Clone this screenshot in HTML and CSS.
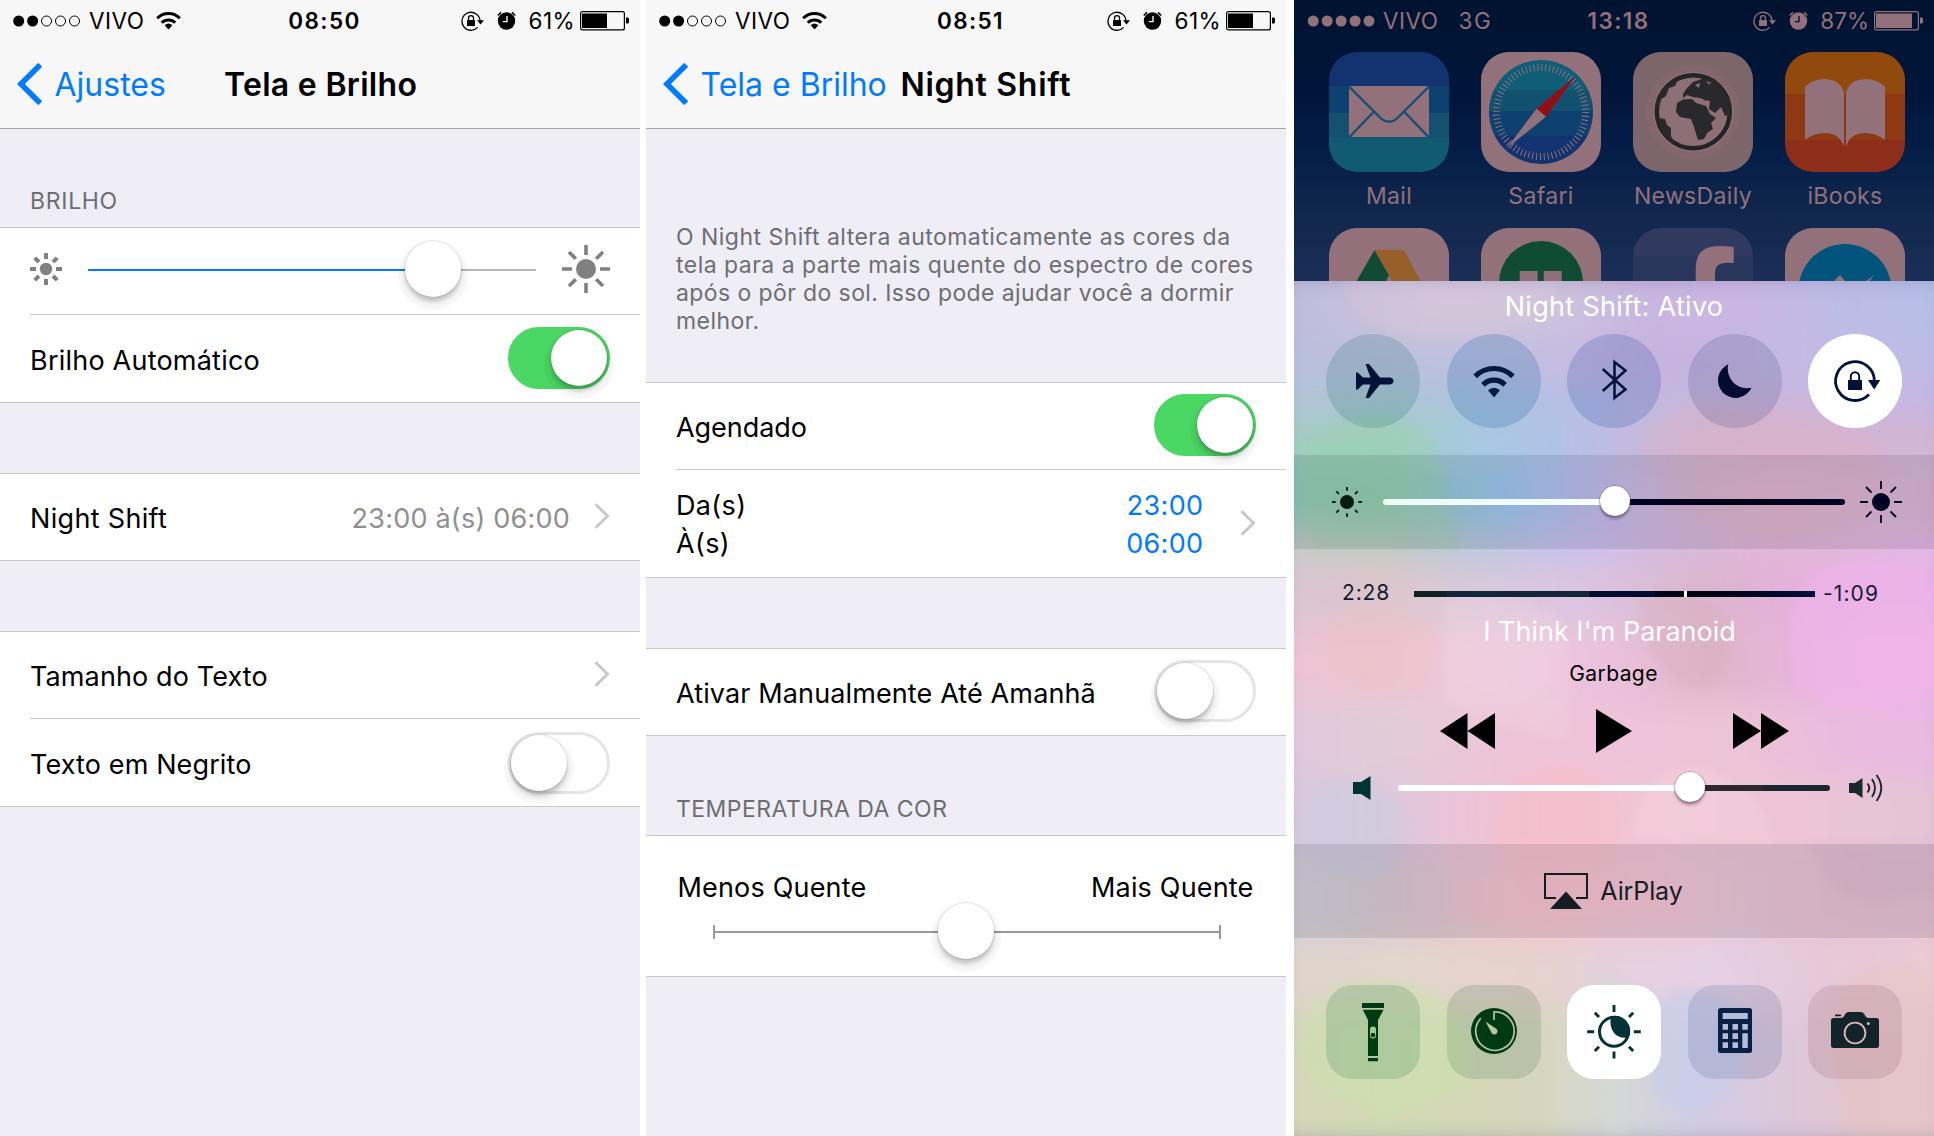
FILE: index.html
```html
<!DOCTYPE html>
<html lang="pt-BR">
<head>
<meta charset="utf-8">
<title>Night Shift</title>
<link rel="stylesheet" href="styles.css">
</head>
<body>
<svg class="defs" width="0" height="0" aria-hidden="true">
  <symbol id="wifi" viewBox="0 0 25 19"><g fill="none" stroke="currentColor" stroke-width="3"><path d="M1.2 7.2A15.8 15.8 0 0 1 23.8 7.2"/><path d="M5.8 11.8A9.4 9.4 0 0 1 19.2 11.8"/></g><path d="M8.6 14.3Q12.5 10.9 16.4 14.3L12.5 18.6Z" fill="currentColor"/></symbol>
  <symbol id="lock" viewBox="0 0 23 20"><path d="M19 10A9 9 0 1 0 16.6 16.4" fill="none" stroke="currentColor" stroke-width="1.3"/><path d="M16 9.3H23L19.5 13.6Z" fill="currentColor"/><rect x="6" y="9" width="8" height="6" rx=".6" fill="currentColor"/><path d="M7.5 9.5V7.2a2.5 2.5 0 0 1 5 0V9.5" fill="none" stroke="currentColor" stroke-width="1.3"/></symbol>
  <symbol id="sun" viewBox="0 0 48 48"><g stroke="currentColor" stroke-width="3.6"><path d="M24 0V10M24 38V48M0 24H10M38 24H48M7 7L13.8 13.8M34.2 34.2L41 41M41 7L34.2 13.8M13.8 34.2L7 41"/></g><circle cx="24" cy="24" r="10" fill="currentColor"/></symbol>
  <symbol id="chev" viewBox="0 0 16 26"><path d="M1.5 1.2L13.5 13L1.5 24.8" fill="none" stroke="currentColor" stroke-width="3"/></symbol>
  <symbol id="back" viewBox="0 0 25 42"><path d="M23.2 1.8L3.9 21L23.2 40.2" fill="none" stroke="currentColor" stroke-width="5.6"/></symbol>
</svg>
<main class="screens">

  <section class="phone">
    <header class="status">
      <div class="carrier">
        <svg class="dots" viewBox="0 0 68 12"><g fill="currentColor"><circle cx="5.7" cy="6" r="5.5"/><circle cx="19.6" cy="6" r="5.5"/></g><g fill="none" stroke="currentColor"><circle cx="33.5" cy="6" r="5"/><circle cx="47.5" cy="6" r="5"/><circle cx="61.5" cy="6" r="5"/></g></svg>
        <span class="vivo">VIVO</span><svg class="wifi"><use href="#wifi"/></svg>
      </div>
      <span class="time">08:50</span>
      <div class="tray"><svg class="lock"><use href="#lock"/></svg>
        <svg class="alarm" viewBox="0 0 19 19"><circle cx="9.5" cy="10" r="8.7" fill="currentColor"/><path d="M.8 4.5L4 1.2M18.2 4.5L15 1.2" stroke="currentColor" stroke-width="1.6"/><path d="M10 5V10.6H5.8" fill="none" stroke="#f7f7f7" stroke-width="1.4"/></svg>
        <span class="pct">61%</span>
        <svg class="battery" viewBox="0 0 49 20"><rect x=".6" y=".6" width="43.8" height="18.3" rx="2" fill="none" stroke="currentColor" stroke-width="1.2"/><rect x="2" y="2.5" width="25" height="14.5" fill="currentColor"/><path d="M46 6.5h1.500q1.500 0 1.500 1.500v3q0 1.500-1.500 1.500H46z" fill="currentColor"/></svg></div>
    </header>
    <nav class="nav"><a class="back"><svg class="backicon"><use href="#back"/></svg>Ajustes</a><h1 class="title">Tela e Brilho</h1></nav>
    <h2 class="label label-first">BRILHO</h2>
    <div class="group">
      <div class="row sliderrow">
        <svg class="sun-s" viewBox="0 0 32 32"><path d="M16 0V6M16 26V32M0 16H6M26 16H32M4.8 4.8L9 9M23 23L27.2 27.2M27.2 4.8L23 9M9 23L4.8 27.2" stroke="#808080" stroke-width="4"/><circle cx="16" cy="16" r="6.2" fill="#808080"/></svg>
        <div class="track"><i class="thumb"></i></div>
        <svg class="sun-l"><use href="#sun"/></svg>
      </div>
      <div class="row line"><span class="t2">Brilho Automático</span><i class="toggle on up"></i></div>
    </div>
    <div class="group gap70">
      <div class="row"><span class="t3">Night Shift</span><span class="value">23:00 à(s) 06:00</span><svg class="chev"><use href="#chev"/></svg></div>
    </div>
    <div class="group gap70">
      <div class="row"><span>Tamanho do Texto</span><svg class="chev"><use href="#chev"/></svg></div>
      <div class="row line"><span>Texto em Negrito</span><i class="toggle"></i></div>
    </div>
  </section>

  <section class="phone second">
    <header class="status">
      <div class="carrier">
        <svg class="dots" viewBox="0 0 68 12"><g fill="currentColor"><circle cx="5.7" cy="6" r="5.5"/><circle cx="19.6" cy="6" r="5.5"/></g><g fill="none" stroke="currentColor"><circle cx="33.5" cy="6" r="5"/><circle cx="47.5" cy="6" r="5"/><circle cx="61.5" cy="6" r="5"/></g></svg>
        <span class="vivo">VIVO</span><svg class="wifi"><use href="#wifi"/></svg>
      </div>
      <span class="time">08:51</span>
      <div class="tray"><svg class="lock"><use href="#lock"/></svg>
        <svg class="alarm" viewBox="0 0 19 19"><circle cx="9.5" cy="10" r="8.7" fill="currentColor"/><path d="M.8 4.5L4 1.2M18.2 4.5L15 1.2" stroke="currentColor" stroke-width="1.6"/><path d="M10 5V10.6H5.8" fill="none" stroke="#f7f7f7" stroke-width="1.4"/></svg>
        <span class="pct">61%</span>
        <svg class="battery" viewBox="0 0 49 20"><rect x=".6" y=".6" width="43.8" height="18.3" rx="2" fill="none" stroke="currentColor" stroke-width="1.2"/><rect x="2" y="2.5" width="25" height="14.5" fill="currentColor"/><path d="M46 6.5h1.500q1.500 0 1.500 1.500v3q0 1.500-1.500 1.500H46z" fill="currentColor"/></svg></div>
    </header>
    <nav class="nav"><a class="back wide"><svg class="backicon"><use href="#back"/></svg>Tela e Brilho</a><h1 class="title spaced">Night Shift</h1></nav>
    <p class="note">O Night Shift altera automaticamente as cores da<br>tela para a parte mais quente do espectro de cores<br><span class="tight">após o pôr do sol. Isso pode ajudar você a dormir</span><br>melhor.</p>
    <div class="group">
      <div class="row"><span class="t0">Agendado</span><i class="toggle on up"></i></div>
      <div class="row line tall"><div class="pair"><span>Da(s)</span><span>À(s)</span></div><div class="pair blue"><span>23:00</span><span>06:00</span></div><svg class="chev"><use href="#chev"/></svg></div>
    </div>
    <div class="group gap70">
      <div class="row"><span>Ativar Manualmente Até Amanhã</span><i class="toggle up"></i></div>
    </div>
    <h2 class="label label-temp">TEMPERATURA DA COR</h2>
    <div class="group temp">
      <div class="ends"><span>Menos Quente</span><span>Mais Quente</span></div>
      <div class="scale"><i class="thumb"></i></div>
    </div>
  </section>

  <section class="phone home">
    <header class="status dim">
      <div class="carrier">
        <svg class="dots" viewBox="0 0 68 12"><g fill="currentColor"><circle cx="6.2" cy="6" r="5.5"/><circle cx="20.2" cy="6" r="5.5"/><circle cx="34.1" cy="6" r="5.5"/><circle cx="48.1" cy="6" r="5.5"/><circle cx="62" cy="6" r="5.5"/></g></svg>
        <span class="vivo">VIVO</span><span class="net">3G</span>
      </div>
      <span class="time">13:18</span>
      <div class="tray"><svg class="lock"><use href="#lock"/></svg>
        <svg class="alarm" viewBox="0 0 19 19"><circle cx="9.5" cy="10" r="8.7" fill="currentColor"/><path d="M.8 4.5L4 1.2M18.2 4.5L15 1.2" stroke="currentColor" stroke-width="1.6"/><path d="M10 5V10.6H5.8" fill="none" stroke="#00132f" stroke-width="1.4"/></svg>
        <span class="pct p87">87%</span>
        <svg class="battery" viewBox="0 0 49 20"><rect x=".6" y=".6" width="43.8" height="18.3" rx="2" fill="none" stroke="currentColor" stroke-width="1.2"/><rect x="2" y="2.5" width="36" height="14.5" fill="currentColor"/><path d="M46 6.5h1.500q1.500 0 1.500 1.500v3q0 1.500-1.500 1.500H46z" fill="currentColor"/></svg></div>
    </header>
    <div class="apps">
      <div class="app"><svg class="icon" viewBox="0 0 120 120"><path fill="#12336f" d="M0 0h120v34H0z"/><path fill="#0e4070" d="M0 34h120v27H0z"/><path fill="#155070" d="M0 61h120v25H0z"/><path fill="#105a74" d="M0 86h120v34H0z"/><path fill="#93717b" d="M20 34h80v51H20z"/><path d="M20 34.5L51 65.5Q60 74 69 65.5L100 34.5M20.5 85L44.5 60M99.5 85L75.5 60" fill="none" stroke="#144f72" stroke-width="2.4"/></svg><span>Mail</span></div>
      <div class="app"><svg class="icon" viewBox="0 0 120 120"><clipPath id="dial"><circle cx="60" cy="60" r="52"/></clipPath><path fill="#93717b" d="M0 0h120v120H0z"/><g clip-path="url(#dial)"><path fill="#105d77" d="M0 0h120v38H0z"/><path fill="#12506f" d="M0 38h120v21H0z"/><path fill="#0e4070" d="M0 59h120v25H0z"/><path fill="#12336f" d="M0 84h120v36H0z"/></g><circle cx="60" cy="60" r="44.5" fill="none" stroke="#93717b" stroke-width="7" stroke-dasharray=".95 2.933"/><path d="M94.7 24L65 64.7L55.5 56.7Z" fill="#920f16"/><path d="M25.5 96.5L55.5 56.7L65 64.7Z" fill="#93717b"/></svg><span>Safari</span></div>
      <div class="app"><svg class="icon" viewBox="0 0 120 120"><path fill="#7d666a" d="M0 0h120v120H0z"/><circle cx="60" cy="60" r="47" fill="#84676d"/><circle cx="60.3" cy="59.7" r="40" fill="#93717b"/><circle cx="60.3" cy="59.7" r="36.5" fill="#8d7077" stroke="#222426" stroke-width="4.5"/><g fill="#29282b"><path d="M43 60L44 51L50 47.5L59 47L63 51L73 54L77 62L83 66L78 71L80 77L74 81L71 87L65 88L61 75L58 67L47 65Z"/><path d="M50 46L50 42L54 36L60 30L72 26L82 27L93 40L98 55L97 62L92 64L88 55L82 61L76 57L77 49L70 48L60 45L54 43Z"/><path d="M45 27L42 34L36 36L33 44L27 48L24 58L23 50L29 37Z"/><path d="M25 66L32 67L34 73L38 76L38 84L42 92L30 82Z"/></g><path d="M62 45l8 2 3 4-5 0zM62 33l5-2-1 5zM73 29l6 2-4 1 3 3" fill="#8d7077"/></svg><span>NewsDaily</span></div>
      <div class="app"><svg class="icon" viewBox="0 0 120 120"><path fill="#91490e" d="M0 0h120v42H0z"/><path fill="#8f3914" d="M0 42h120v46H0z"/><path fill="#8c2e1a" d="M0 88h120v32H0z"/><path fill="#93717b" d="M20 34.5Q28 27 40 27Q57 28 59 42V95Q55 81 40 81Q29 81 20 88ZM100 34.5Q92 27 80 27Q63 28 61 42V95Q65 81 80 81Q91 81 100 88Z"/></svg><span>iBooks</span></div>
      <div class="app"><svg class="icon" viewBox="0 0 120 120"><path fill="#93717b" d="M0 0h120v120H0z"/><path d="M45.5 22L60 47L57 54H27Z" fill="#104a34"/><path d="M45.5 22H75L92 54H63L60 47Z" fill="#95602c"/></svg></div>
      <div class="app"><svg class="icon" viewBox="0 0 120 120"><path fill="#93717b" d="M0 0h120v120H0z"/><circle cx="60" cy="55" r="42" fill="#104b35"/><path fill="#8f6f7a" d="M38.7 43h18v20h-18zM62.7 43h18v20h-18z"/></svg></div>
      <div class="app"><svg class="icon" viewBox="0 0 120 120"><path fill="#30395f" d="M0 0h120v28H0z"/><path fill="#27365a" d="M0 28h120v92H0z"/><path fill="#93717b" d="M62.7 60V40Q63 18 85 18Q95 18 100.7 19V35H92Q82 35 82 45V60Z"/></svg></div>
      <div class="app"><svg class="icon" viewBox="0 0 120 120"><path fill="#93717b" d="M0 0h120v120H0z"/><circle cx="60" cy="62.5" r="46.5" fill="#02547c"/><path fill="#93717b" d="M48 54L55 47L61 54ZM80 54L89 47L84 54Z"/></svg></div>
    </div>

    <div class="cc">
      <div class="wall" aria-hidden="true">
        <i class="w w1"></i><i class="w w2"></i><i class="w w3"></i><i class="w w4"></i><i class="w w5"></i><i class="w w6"></i><i class="w w7"></i><i class="w w8"></i><i class="w w9"></i><i class="w w10"></i><i class="w w11"></i><i class="w w12"></i><i class="w w13"></i>
      </div>
      <svg class="patches" viewBox="0 281 640 855" aria-hidden="true">
        <path d="M50 281Q60 340 150 340Q250 338 268 281Z" fill="#dcc6d8" opacity=".3"/>
        <path d="M5 455Q40 415 85 415Q140 420 143 460L165 549H20Z" fill="#9cd0a8" opacity=".3"/>
        <path d="M345 455Q360 395 450 400Q560 420 590 455V510Q500 560 400 520Z" fill="#e2aec4" opacity=".2"/>
        <path d="M495 640Q490 570 560 562Q640 550 640 620V690Q580 720 520 700Q498 690 495 640Z" fill="#f2b4ec" opacity=".45"/>
        <path d="M30 620Q80 590 140 620Q150 660 130 690Q70 700 40 660Z" fill="#f0bec4" opacity=".25"/>
        <path d="M150 600Q210 580 268 620Q285 700 270 740Q200 730 150 700Z" fill="#f2d4e2" opacity=".3"/>
        <path d="M345 600Q420 570 440 640Q430 690 400 690Q350 670 345 600Z" fill="#d6a8b8" opacity=".3"/>
        <path d="M200 850Q190 760 290 765Q330 780 320 860Q280 910 240 900Z" fill="#fcbcc4" opacity=".25"/>
        <path d="M336 840Q345 760 410 768Q470 790 480 844Z" fill="#fad8e0" opacity=".3"/>
        <path d="M8 840Q10 782 60 780Q115 790 115 844Q90 890 60 880Q20 870 8 840Z" fill="#cacce0" opacity=".4"/>
        <path d="M515 844H640V890Q580 910 540 890Z" fill="#dcb0cc" opacity=".25"/>
        <path d="M10 1060Q10 980 80 978Q180 985 178 1070Q170 1100 120 1105L88 1128L75 1105Q20 1100 10 1060Z" fill="#cae2ac" opacity=".45"/>
        <path d="M350 1050Q350 992 400 990Q450 995 455 1040Q440 1110 395 1118Q355 1100 350 1050Z" fill="#c6ccee" opacity=".5"/>
        <path d="M300 970Q300 1040 310 1136H335Q330 1060 334 985Z" fill="#d0dcd8" opacity=".35"/>
        <path d="M535 1050Q530 960 600 960Q640 970 640 1000V1136H560Z" fill="#e8c0bc" opacity=".3"/>
      </svg>
      <div class="content">
        <p class="cctitle">Night Shift: Ativo</p>
        <div class="buttons">
          <svg class="round c1" viewBox="0 0 94 94"><path fill="#001238" d="M30 38.3L32 38.8L37 43.4H44.5L39.5 30H43L54 43.4H64Q67.5 44 67.5 47Q67.5 50 64 50.4H54L43 64H39.5L44.5 50.4H37L32 55.2L30 55.7Z"/></svg>
          <svg class="round c2" viewBox="0 0 94 94"><g fill="none" stroke="#001a3c" stroke-width="5.2"><path d="M28.2 42.3A26.5 26.5 0 0 1 65.8 42.3"/><path d="M36 50.8A15.5 15.5 0 0 1 58 50.8"/></g><path fill="#001a3c" d="M41 56.3Q47 51.3 53 56.3L47 63.5Z"/></svg>
          <svg class="round c3" viewBox="0 0 94 94"><path d="M35.7 35L58.5 55.5L47.5 64V28L58.5 36.5L35.7 57" fill="none" stroke="#001238" stroke-width="2.5"/></svg>
          <svg class="round c4" viewBox="0 0 94 94"><path fill="#000c32" d="M40.3 30.3A17.6 17.6 0 1 0 63.5 53.8A19.5 19.5 0 0 1 40.3 30.3Z"/></svg>
          <svg class="round lit" viewBox="0 0 94 94"><path d="M66.4 47A19.4 19.4 0 1 0 61 60.5" fill="none" stroke="#001238" stroke-width="2.8"/><path d="M60 46H72.3L66.2 55.6Z" fill="#001238"/><path d="M40 46h14v10H40z" fill="#001238"/><path d="M42.8 46.5V42.5a4.2 4.2 0 0 1 8.4 0V46.5" fill="none" stroke="#001238" stroke-width="2"/></svg>
        </div>
        <div class="band bright">
          <svg class="ccsun-s" viewBox="0 0 30 30"><circle cx="15" cy="15" r="7" fill="#041c10"/><path d="M15 0V3.7M15 26.3V30M0 15H3.7M26.3 15H30M4.3 4.3L7 7M23 23L25.7 25.7M25.7 4.3L23 7M7 23L4.3 25.7" stroke="#041c20" stroke-width="1.8"/></svg>
          <div class="bar bar-b"><i class="knob"></i></div>
          <svg class="ccsun-l" viewBox="0 0 42 42"><circle cx="21" cy="21" r="9" fill="#000524"/><path d="M21 0V8M21 34V42M0 21H8M34 21H42M6 6L11.5 11.5M30.5 30.5L36 36M36 6L30.5 11.5M11.5 30.5L6 36" stroke="#000524" stroke-width="1.8"/></svg>
        </div>
        <div class="media">
          <div class="progress"><span class="elapsed">2:28</span><div class="seek"><i class="mark"></i></div><span class="left">-1:09</span></div>
          <p class="song">I Think I'm Paranoid</p>
          <p class="artist">Garbage</p>
          <div class="transport">
            <svg width="55" height="36" viewBox="0 0 55 36"><path d="M0 18L27.5 0V18L55 0V36L27.5 18V36Z"/></svg>
            <svg width="36" height="44" viewBox="0 0 36 44"><path d="M0 0L36 22L0 44Z"/></svg>
            <svg width="56" height="36" viewBox="0 0 56 36"><path d="M56 18L28 0V18L0 0V36L28 18V36Z"/></svg>
          </div>
          <div class="volume">
            <svg class="vol-s" viewBox="0 0 18 24"><path d="M0 6H8L17.5 0V24L8 18H0Z" fill="#003434"/></svg>
            <div class="bar bar-v"><i class="knob"></i></div>
            <svg class="vol-l" viewBox="0 0 34 28"><path d="M0 9H6L13.5 4V24L6 19H0Z" fill="#1c2830"/><g fill="none" stroke="#1c2830" stroke-width="1.9"><path d="M18.5 9.5Q22 14 18.5 18.5"/><path d="M23 5Q29 14 23 23"/><path d="M27.5 1Q37 14 27.5 27"/></g></svg>
          </div>
        </div>
        <div class="band airplay"><svg width="44" height="36" viewBox="0 0 44 36"><path d="M12 25H1V1H43V25H32" fill="none" stroke="#151c24" stroke-width="2"/><path d="M22 18.5L38 36H6Z" fill="#151c24"/></svg><span>AirPlay</span></div>
        <div class="buttons tools">
          <svg class="square s1" viewBox="0 0 94 94"><path fill="#003a12" d="M36 18H58V23H36ZM36.8 24.8H57.5L52 35V71H42V35ZM42 73H52V76.2H42Z"/><rect x="44" y="41.5" width="6" height="12" rx="3" fill="#a4c89c"/><circle cx="47" cy="50" r="2.3" fill="#003a12"/></svg>
          <svg class="square s2" viewBox="0 0 94 94"><circle cx="47" cy="46" r="23" fill="#003a12"/><path d="M47 35V27A19.2 19.2 0 1 1 33.8 33.2" fill="none" stroke="#b4c8a4" stroke-width="1.7"/><path d="M38.5 36.5L49.3 43.8A3.2 3.2 0 1 1 44.6 48Z" fill="#b4c8a4"/></svg>
          <svg class="square lit" viewBox="0 0 94 94"><path d="M47 20V27M47 66.5V73.5M20.2 46.8H27.2M66.8 46.8H73.8M27.8 27.8L32 32M62 61.8L66.2 66M66.2 27.8L62 32M32 61.8L27.8 66" stroke="#043238" stroke-width="2.9"/><circle cx="47" cy="46.8" r="14.5" fill="#fff" stroke="#043238" stroke-width="3"/><path d="M44 31.5A15 15 0 0 1 61.5 52.5Q52 54 47 48Q42 41 44 31.5Z" fill="#043238"/></svg>
          <svg class="square s4" viewBox="0 0 94 94"><rect x="30" y="23" width="34" height="45" rx="2.5" fill="#082044"/><path fill="#b4bcdc" d="M34.6 28H59.8V34H34.6ZM34.6 39H40V44.7H34.6ZM44.5 39H50V44.7H44.5ZM54.3 39H59.8V44.7H54.3ZM34.6 48.3H40V54H34.6ZM44.5 48.3H50V54H44.5ZM34.6 57.3H40V63H34.6ZM44.5 57.3H50V63H44.5ZM54.3 48.3H59.8V63H54.3Z"/></svg>
          <svg class="square s5" viewBox="0 0 94 94"><path fill="#12232a" d="M27 29.5H33V31.3H27ZM25.5 33H33Q35.5 33 37 29.5Q38 27 40.5 27H53Q55.5 27 56.5 29.5Q58 33 60.5 33H68.5Q71 33 71 35.5V60.5Q71 63 68.5 63H25.5Q23 63 23 60.5V35.5Q23 33 25.5 33Z"/><circle cx="47" cy="48" r="10.4" fill="none" stroke="#d8b4bc" stroke-width="1.9"/><circle cx="60.3" cy="38.5" r="1.5" fill="#d8b4bc"/></svg>
        </div>
      </div>
    </div>
  </section>
</main>
</body>
</html>
```
FILE: styles.css
```css
* { box-sizing: border-box; margin: 0; padding: 0; }
body { background: #fff; font-family: Inter, "Liberation Sans", sans-serif; color: #000; overflow: hidden; }
svg { display: block; flex: none; }
i { display: block; }
.defs { position: absolute; }
.screens { display: flex; width: 1934px; height: 1136px; }
.phone { flex: none; width: 640px; height: 1136px; background: #efeef7; overflow: hidden; }
.second { margin: 0 8px 0 6px; }

/* status bar */
.status { display: flex; align-items: center; height: 41px; padding: 0 11px 0 13px; background: #f7f7f7; font-size: 22.5px; white-space: nowrap; }
.carrier { display: flex; align-items: center; width: 266px; }
.dots { width: 68px; height: 12px; }
.vivo { margin-left: 8px; letter-spacing: .5px; }
.wifi { width: 25px; height: 19px; margin-left: 11px; }
.net { margin-left: 20px; letter-spacing: 1.6px; }
.time { width: 91px; text-align: center; font-weight: 600; letter-spacing: 1.4px; }
.tray { display: flex; align-items: center; margin-left: auto; }
.lock { width: 23px; height: 20px; }
.alarm { width: 19px; height: 19px; margin-left: 13px; }
.pct { margin-left: 13px; letter-spacing: .4px; }
.p87 { margin-left: 12px; letter-spacing: 0; }
.battery { width: 49px; height: 20px; margin-left: 5px; }

/* navigation bar */
.nav { display: flex; align-items: center; height: 88px; padding-left: 17px; background: #f7f7f7; border-bottom: 1px solid #a7a7ab; font-size: 32px; white-space: nowrap; }
.back { display: flex; align-items: center; width: 207px; color: #007aff; }
.back.wide { width: 237.5px; }
.backicon { width: 25px; height: 42px; margin: 0 12.5px 1px 0; }
.title { font-size: 32px; font-weight: 600; letter-spacing: .3px; }
.title.spaced { letter-spacing: .7px; }

/* grouped lists */
.label { padding-left: 30px; font-size: 23px; font-weight: 400; color: #6d6d72; letter-spacing: .7px; line-height: 28px; }
.label-first { height: 98px; padding-top: 57.5px; }
.label-temp { height: 99px; padding-top: 59px; letter-spacing: .46px; }
.group { background: #fff; border-top: 1px solid #c8c7cc; border-bottom: 1px solid #c8c7cc; font-size: 27px; letter-spacing: .12px; }
.gap70 { margin-top: 70px; }
.row { display: flex; align-items: center; height: 86px; padding-right: 30px; margin-left: 30px; }
.row > span { padding-top: 3px; }
.line { height: 88px; border-top: 1px solid #c8c7cc; }
.t0 { letter-spacing: -.05px; }
.t2 { letter-spacing: .22px; }
.t3 { letter-spacing: .32px; }
.value { margin-left: auto; color: #8e8e93; letter-spacing: .22px; }
.chev { position: relative; top: -1px; width: 16px; height: 26px; margin-left: auto; color: #c7c7cc; }
.value + .chev { margin-left: 24px; }
.toggle { position: relative; width: 102px; height: 62px; margin-left: auto; border-radius: 31px; border: 3px solid #e5e5e5; }
.toggle.up { top: -1px; }
.toggle.on { background: #4bd763; border-color: #4bd763; }
.toggle::after { content: ""; position: absolute; left: 0; top: 0; width: 56px; height: 56px; border-radius: 50%; background: #fff; box-shadow: 0 0 0 1px rgba(0,0,0,.08), 0 5px 4px rgba(0,0,0,.2), 0 6px 2px 7px rgba(0,0,0,.035); }
.toggle.on::after { left: 40px; }
.sun-s { width: 32px; height: 32px; position: relative; top: -2px; }
.sun-l { width: 48px; height: 48px; color: #808080; position: relative; top: -2px; }
.track { position: relative; top: -1px; width: 448px; height: 2px; margin: 0 26px; background: linear-gradient(90deg, #007aff 345px, #b6b6b6 345px); }
.thumb { position: absolute; left: 317px; top: -28px; width: 56px; height: 56px; border-radius: 50%; background: #fff; box-shadow: 0 0 0 1px rgba(0,0,0,.08), 0 5px 4px rgba(0,0,0,.2), 0 6px 2px 7px rgba(0,0,0,.035); }

.note { height: 253px; padding: 93.5px 0 0 30px; font-size: 23px; line-height: 28px; letter-spacing: .47px; color: #6d6d72; white-space: nowrap; }
.tight { letter-spacing: .4px; }
.tall { height: 108px; }
.pair { display: flex; flex-direction: column; line-height: 38px; padding-top: 2px; letter-spacing: .35px; }
.blue { margin-left: auto; margin-right: 36.5px; color: #007aff; text-align: right; }
.blue + .chev { margin-left: 0; }
.temp { height: 142px; }
.ends { display: flex; justify-content: space-between; padding: 36px 32.5px 0 31.5px; line-height: 32px; letter-spacing: .18px; }
.scale { position: relative; width: 508px; height: 14px; margin: 21px 0 0 67px; border-left: 2px solid #98989b; border-right: 2px solid #98989b; background: linear-gradient(#98989b, #98989b) 0 6px / 100% 2px no-repeat; }
.scale .thumb { left: 223px; top: -22px; }

/* dimmed home screen */
.home { background: linear-gradient(#00132f 0, #00153a 90px, #061f49 160px, #11274c 215px, #1b2e58 281px); }
.dim { background: none; color: #93717b; }
.apps { display: grid; grid-template-columns: repeat(4, 120px); column-gap: 32px; grid-template-rows: 176px 53px; height: 240px; padding: 11px 0 0 35px; overflow: hidden; font-size: 23px; letter-spacing: .35px; color: #93717b; }
.app { display: flex; flex-direction: column; align-items: center; white-space: nowrap; }
.app span { line-height: 49px; }
.icon { width: 120px; height: 120px; border-radius: 28px; }

/* control center */
.cc { position: relative; height: 855px; overflow: hidden; color: #0a1020; }
.wall { position: absolute; inset: -20px -30px; display: flex; flex-direction: column; filter: blur(16px); }
.w { flex: none; }
.patches { position: absolute; inset: 0; width: 640px; height: 855px; filter: blur(4px); }
.w1 { height: 74px; background: linear-gradient(90deg, #bcbcdc, #c4bfdc 80px, #d0c4dc 160px, #cfc4dc 280px, #c8b6e0 380px, #cab6e4 480px, #bcbce6 580px, #b4c0e8); }
.w2 { height: 50px; background: linear-gradient(90deg, #b8bedc, #bcc0dc 120px, #bec0e0 220px, #c6bce2 300px, #c6b2de 390px, #c6b8e2 500px, #c0bce6 600px, #bcbce6); }
.w3 { height: 35px; background: linear-gradient(90deg, #b4c4d8, #aac6d4 120px, #acc4e0 230px, #b8bee6 330px, #cab6d8 450px, #ccb6dc 560px, #c6b6e4); }
.w4 { height: 45px; background: linear-gradient(90deg, #a2ccc4, #a0d0bc 120px, #a8cae0 200px, #aec4e6 270px, #bebce6 340px, #d2b4cc 430px, #d8b4cc 520px, #d0b6d8); }
.w5 { height: 60px; background: linear-gradient(90deg, #94cdbd, #92d0b4 120px, #98c8d8 190px, #9cc8f0 240px, #c2bcec 330px, #d8b8d4 430px, #e4b8d0 510px, #dab6d8); }
.w6 { height: 37px; background: linear-gradient(90deg, #c8ccc8, #c0ccc4 120px, #b8c8e0 220px, #c8c0f0 310px, #d6b8e0 410px, #e2b6d2 500px, #e4b8e8); }
.w7 { height: 63px; background: linear-gradient(90deg, #dac4d4, #dec6cc 120px, #d8cada 210px, #dcc4e2 320px, #dab8cc 430px, #e4b0da 520px, #eab2e8 600px); }
.w8 { height: 75px; background: linear-gradient(90deg, #ecc4d6, #edc4ce 110px, #eecce0 230px, #eac0dc 350px, #dfb6c8 450px, #e8b4dc 540px, #efb4e8 610px); }
.w9 { height: 75px; background: linear-gradient(90deg, #e2c6dc, #e2ccd8 130px, #efc4d8 250px, #eec2da 370px, #ecc4d6 470px, #eabadf 580px, #e8b8e4); }
.w10 { height: 85px; background: linear-gradient(90deg, #d6c8de, #d8cadd 100px, #eac4d8 190px, #f4c0d0 290px, #f0c6d6 400px, #ecc4d6 540px, #e2c4d6); }
.w11 { height: 78px; background: linear-gradient(90deg, #d2d4dc, #dccad4 130px, #fac4d0 260px, #f8c6d4 380px, #ecc8d8 480px, #eac2d4 580px, #e8c4d4); }
.w12 { height: 72px; background: linear-gradient(90deg, #dcd4cc, #e2d6cc 130px, #e6d2cc 270px, #e4d0de 350px, #e4d0e4 460px, #e6c8d8 560px, #ecccd2); }
.w13 { height: 146px; background: linear-gradient(90deg, #d6d6bc, #d2dab4 120px, #d6d6bc 270px, #d6d8d4 340px, #d2cee4 430px, #dcc8dc 520px, #e4c6ce 590px, #e6c8cc); }
.content { position: relative; }
.cctitle { height: 53px; line-height: 52px; text-align: center; font-size: 27px; letter-spacing: .3px; color: #fff; }
.buttons { display: flex; justify-content: space-between; height: 121px; padding: 0 32px; }
.round, .square { width: 94px; height: 94px; border-radius: 50%; background: rgba(0,30,90,.14); }
.square { border-radius: 27px; background: rgba(0,50,60,.11); }
.c1 { background: rgba(0,90,90,.16); }
.c2 { background: rgba(0,80,150,.19); }
.c3 { background: rgba(20,60,150,.19); }
.s1 { background: rgba(0,90,40,.15); }
.s2 { background: rgba(0,60,30,.13); }
.s4 { background: rgba(20,50,100,.13); }
.s5 { background: rgba(80,20,50,.11); }
.round.lit, .square.lit { background: #fff; }
.band { display: flex; align-items: center; height: 94px; background: rgba(0,10,30,.1); }
.bright { padding-left: 38px; }
.ccsun-s { width: 30px; height: 30px; }
.ccsun-l { width: 42px; height: 42px; }
.bar { position: relative; height: 6px; border-radius: 3px; }
.bar-b { width: 462px; margin: 0 15px 0 21px; background: linear-gradient(90deg, #effcfa 180px, #fff 220px, #000424 232px, #000018 340px, #000524); }
.knob { position: absolute; left: 217px; top: -13px; width: 30px; height: 30px; border-radius: 50%; background: #fff; box-shadow: 0 0 0 1px rgba(80,60,80,.25), 0 3px 3px rgba(40,20,40,.4); }
.media { height: 295px; padding-top: 27px; text-align: center; }
.progress { display: flex; align-items: center; height: 36px; padding-left: 48px; font-size: 21px; text-align: left; color: #141c30; }
.elapsed { width: 72px; letter-spacing: .85px; line-height: 34px; margin-top: -2px; }
.left { margin-left: 8px; letter-spacing: 1.1px; margin-top: -1px; }
.seek { width: 401px; height: 6px; background: linear-gradient(90deg, #0e2022 32px, #10263a 33px 175px, #000c30 176px 240px, #000018 241px 315px, #00103c); }
.mark { width: 3px; height: 6px; margin-left: 270px; background: #fff; }
.song { height: 38px; line-height: 40px; font-size: 27px; color: #fff; padding-right: 9px; }
.artist { line-height: 47px; font-size: 21px; letter-spacing: .43px; color: #000; padding-right: 1px; }
.transport { display: flex; align-items: center; justify-content: space-between; height: 68px; padding: 0 145px 0 146px; }
.volume { display: flex; align-items: center; height: 46px; padding-left: 58.5px; }
.vol-s { width: 18px; height: 24px; }
.vol-l { width: 34px; height: 28px; }
.bar-v { width: 432px; margin: 0 19px 0 27.5px; background: linear-gradient(90deg, #fff 290px, #2c282e 291px 365px, #1a2630 366px); }
.bar-v .knob { left: 277px; top: -13px; }
.airplay { justify-content: center; gap: 12.5px; padding-right: 1.5px; font-size: 25px; letter-spacing: -.1px; color: #151c24; }
.tools { padding-top: 47px; height: 198px; }
```
